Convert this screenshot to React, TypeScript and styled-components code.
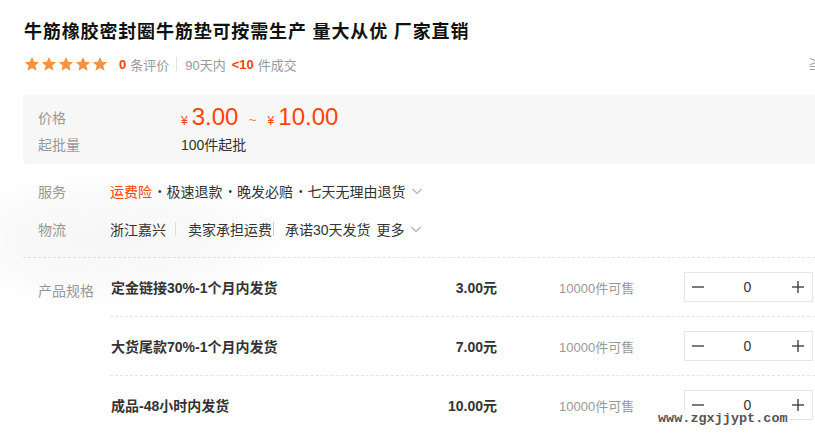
import React from "react";
import styled, { createGlobalStyle } from "styled-components";

const GlobalStyle = createGlobalStyle`
  html, body { margin: 0; padding: 0; background: #fff; overflow: hidden; }
  body {
    font-family: "Liberation Sans", Arial, "Noto Sans CJK SC", sans-serif;
    color: #333;
    width: 815px;
    height: 440px;
  }
`;

const Page = styled.div`
  position: relative;
  width: 792px;
  padding: 20px 0 0 23px;
  overflow: hidden;
  height: 420px;
`;

const Title = styled.h1`
  margin: 0 0 0 1px;
  font-size: 18px;
  line-height: 24px;
  font-weight: bold;
  letter-spacing: 0.85px;
  color: #111;
  white-space: nowrap;
`;

const RatingRow = styled.div`
  display: flex;
  align-items: center;
  height: 20px;
  margin-top: 10px;
  padding-left: 1px;
  font-size: 13px;
  color: #999;
  white-space: nowrap;
  position: relative;
`;

const Stars = styled.div`
  display: flex;
  gap: 1px;
  margin-right: 11px;
`;

const Hot = styled.span`
  color: #ff4400;
  font-weight: bold;
  margin-right: 4px;
`;

const VSep = styled.span<{ $c?: string }>`
  display: inline-block;
  width: 1px;
  height: 14px;
  background: ${(p) => p.$c ?? "#e2e2e2"};
`;

const RatingSep = styled(VSep)`
  margin: 0 8px 0 7px;
`;

const Clip = styled.span`
  position: absolute;
  left: 785px;
  top: 1px;
  font-size: 12px;
  color: #999;
`;

const PriceBox = styled.div`
  margin-top: 21px;
  background: #f7f7f7;
  border-radius: 4px;
  padding: 7px 0 8px 15px;
  width: 800px;
`;

const PriceRow = styled.div<{ $h: number }>`
  display: grid;
  grid-template-columns: 142px 1fr;
  align-items: center;
  height: ${(p) => p.$h}px;
`;

const Label = styled.span`
  font-size: 14px;
  color: #999;
  white-space: nowrap;
`;

const PriceLine = styled.div`
  display: flex;
  align-items: baseline;
  color: #ff4400;
  margin-left: 1px;
`;

const Yen = styled.span`
  font-size: 12px;
  margin-right: 4px;
`;

const Big = styled.span`
  font-size: 24px;
`;

const Tilde = styled.span`
  font-size: 14px;
  color: #f08060;
  margin: 0 11px 0 10px;
`;

const MinText = styled.span`
  font-size: 14px;
  color: #333;
  margin-left: 1px;
`;

const InfoSection = styled.div`
  padding: 8px 0 9px 15px;
  border-bottom: 1px dashed #e4e4e4;
`;

const InfoRow = styled.div`
  display: grid;
  grid-template-columns: 72px 1fr;
  align-items: center;
  height: 38px;
`;

const InfoContent = styled.div`
  display: flex;
  align-items: center;
  font-size: 14px;
  color: #333;
  white-space: nowrap;
`;

const Accent = styled.span`
  color: #ff4400;
`;

const Dot = styled.span`
  font-size: 10px;
  margin: 0 5px 0 6px;
`;

const More = styled.span`
  margin-left: 6px;
`;

const Chevron = styled.svg`
  margin-left: 6px;
  width: 10px;
  height: 7px;
`;

const SpecSection = styled.div`
  display: grid;
  grid-template-columns: 72px 1fr;
  padding-left: 15px;
`;

const SpecLabel = styled(Label)`
  padding-top: 23px;
  line-height: 20px;
`;

const SpecList = styled.div`
  display: flex;
  flex-direction: column;
`;

const SpecRow = styled.div<{ $last?: boolean }>`
  display: grid;
  grid-template-columns: 300px 87px 62px 125px 129px;
  align-items: center;
  height: 58px;
  border-bottom: ${(p) => (p.$last ? "none" : "1px dashed #e4e4e4")};
`;

const SpecName = styled.span`
  font-size: 14px;
  font-weight: bold;
  color: #333;
  padding-left: 1px;
  white-space: nowrap;
`;

const SpecPrice = styled.span`
  font-size: 14px;
  font-weight: bold;
  color: #333;
  text-align: right;
`;

const Stock = styled.span`
  grid-column: 4;
  font-size: 13px;
  color: #999;
  white-space: nowrap;
`;

const Stepper = styled.div`
  grid-column: 5;
  display: grid;
  grid-template-columns: 26px 1fr 28px;
  align-items: center;
  height: 28px;
  border: 1px solid #e6e6e6;
  background: #fff;
`;

const StepBtn = styled.span`
  display: flex;
  justify-content: center;
  align-items: center;
`;

const StepValue = styled.span`
  text-align: center;
  font-size: 14px;
  color: #333;
`;

const Watermark = styled.div`
  position: absolute;
  left: 656px;
  top: 411px;
  padding: 0 2px;
  font-family: "Liberation Mono", "DejaVu Sans Mono", monospace;
  font-size: 13.5px;
  font-weight: bold;
  color: #555;
  line-height: 16px;
  background: rgba(255, 255, 255, 0.85);
  white-space: nowrap;
`;

const Shade = styled.div`
  position: absolute;
  left: -80px;
  top: 170px;
  width: 380px;
  height: 140px;
  border-radius: 50%;
  background: radial-gradient(ellipse at center, rgba(0,0,0,0.035) 0%, rgba(0,0,0,0.02) 45%, rgba(0,0,0,0) 70%);
  pointer-events: none;
`;

const Star = () => (
  <svg width="16" height="16" viewBox="0 0 24 24">
    <path
      d="M12 1.5l3.2 7.1 7.6.7-5.8 5.1 1.8 7.6L12 18l-6.8 4 1.8-7.6-5.8-5.1 7.6-.7z"
      fill="#f39240"
    />
  </svg>
);

const Down = () => (
  <Chevron viewBox="0 0 10 7">
    <polyline points="0.5,1 5,5.5 9.5,1" fill="none" stroke="#b0b0b0" strokeWidth="1.1" />
  </Chevron>
);

const Minus = () => (
  <svg width="12" height="12" viewBox="0 0 12 12">
    <line x1="0" y1="6" x2="12" y2="6" stroke="#333" strokeWidth="1.3" />
  </svg>
);

const Plus = () => (
  <svg width="12" height="12" viewBox="0 0 12 12">
    <line x1="0" y1="6" x2="12" y2="6" stroke="#333" strokeWidth="1.3" />
    <line x1="6" y1="0" x2="6" y2="12" stroke="#333" strokeWidth="1.3" />
  </svg>
);

const specs = [
  { name: "定金链接30%-1个月内发货", price: "3.00元" },
  { name: "大货尾款70%-1个月内发货", price: "7.00元" },
  { name: "成品-48小时内发货", price: "10.00元" },
];

export default function App() {
  return (
    <>
      <GlobalStyle />
      <Page>
        <Shade />
        <Title>牛筋橡胶密封圈牛筋垫可按需生产 量大从优 厂家直销</Title>
        <RatingRow>
          <Stars>
            {[0, 1, 2, 3, 4].map((i) => (
              <Star key={i} />
            ))}
          </Stars>
          <Hot>0</Hot>
          <span>条评价</span>
          <RatingSep />
          <span>90天内</span>
          <Hot style={{ marginLeft: 6 }}>&lt;10</Hot>
          <span>件成交</span>
          <Clip>≧</Clip>
        </RatingRow>

        <PriceBox>
          <PriceRow $h={30}>
            <Label>价格</Label>
            <PriceLine>
              <Yen>¥</Yen>
              <Big>3.00</Big>
              <Tilde>~</Tilde>
              <Yen>¥</Yen>
              <Big>10.00</Big>
            </PriceLine>
          </PriceRow>
          <PriceRow $h={24}>
            <Label>起批量</Label>
            <MinText>100件起批</MinText>
          </PriceRow>
        </PriceBox>

        <InfoSection>
          <InfoRow>
            <Label>服务</Label>
            <InfoContent>
              <Accent>运费险</Accent>
              <Dot>•</Dot>
              <span>极速退款</span>
              <Dot>•</Dot>
              <span>晚发必赔</span>
              <Dot>•</Dot>
              <span>七天无理由退货</span>
              <Down />
            </InfoContent>
          </InfoRow>
          <InfoRow>
            <Label>物流</Label>
            <InfoContent>
              <span>浙江嘉兴</span>
              <VSep style={{ margin: "0 12px 0 9px" }} />
              <span>卖家承担运费</span>
              <VSep $c="#ccc" style={{ margin: "0 11px 0 1px" }} />
              <span>承诺30天发货</span>
              <More>更多</More>
              <Down />
            </InfoContent>
          </InfoRow>
        </InfoSection>

        <SpecSection>
          <SpecLabel>产品规格</SpecLabel>
          <SpecList>
            {specs.map((s, i) => (
              <SpecRow key={s.name} $last={i === specs.length - 1}>
                <SpecName>{s.name}</SpecName>
                <SpecPrice>{s.price}</SpecPrice>
                <Stock>10000件可售</Stock>
                <Stepper>
                  <StepBtn>
                    <Minus />
                  </StepBtn>
                  <StepValue>0</StepValue>
                  <StepBtn>
                    <Plus />
                  </StepBtn>
                </Stepper>
              </SpecRow>
            ))}
          </SpecList>
        </SpecSection>
        <Watermark>www.zgxjjypt.com</Watermark>
      </Page>
    </>
  );
}
